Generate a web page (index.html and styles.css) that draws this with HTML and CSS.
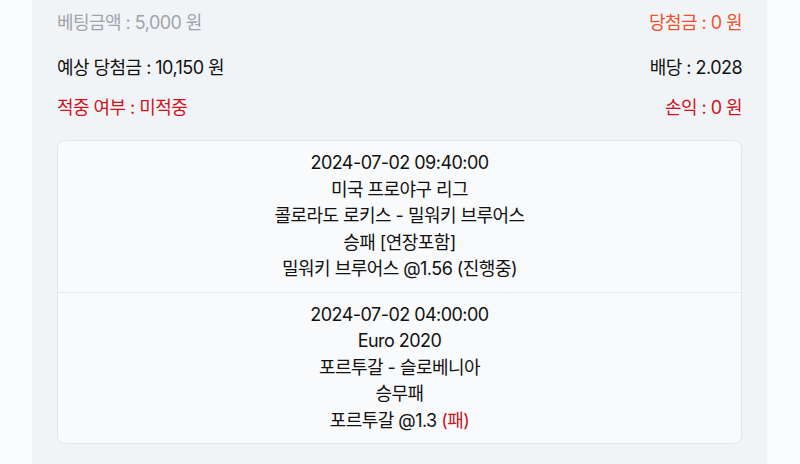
FILE: index.html
```html
<!DOCTYPE html>
<html lang="ko">
<head>
<meta charset="utf-8">
<link rel="stylesheet" href="styles.css">
</head>
<body>
<div class="panel">
  <div class="row row-first">
    <span class="muted">베팅금액 : 5,000 원</span>
    <span class="orange">당첨금 : 0 원</span>
  </div>
  <div class="row">
    <span>예상 당첨금 : 10,150 원</span>
    <span>배당 : 2.028</span>
  </div>
  <div class="row">
    <span class="red">적중 여부 : 미적중</span>
    <span class="red">손익 : 0 원</span>
  </div>
  <div class="card">
    <div class="game">
      <div>2024-07-02 09:40:00</div>
      <div>미국 프로야구 리그</div>
      <div>콜로라도 로키스 - 밀워키 브루어스</div>
      <div>승패 [연장포함]</div>
      <div>밀워키 브루어스 @1.56 (진행중)</div>
    </div>
    <div class="game">
      <div>2024-07-02 04:00:00</div>
      <div>Euro 2020</div>
      <div>포르투갈 - 슬로베니아</div>
      <div>승무패</div>
      <div>포르투갈 @1.3 <span class="red">(패)</span></div>
    </div>
  </div>
</div>
</body>
</html>
```

FILE: styles.css
```css
html, body {
  margin: 0;
  padding: 0;
  background: #fafbfc;
}
body {
  font-family: Inter, "Noto Sans CJK KR", sans-serif;
  font-size: 18px;
  color: #111;
  letter-spacing: -0.03em;
}
.panel {
  margin: 0 33px 0 32px;
  background: #f1f4f7;
  padding: 0 25px 20px 25px;
  height: 464px;
  box-sizing: border-box;
}
.row {
  display: flex;
  justify-content: space-between;
  align-items: center;
  height: 40px;
}
.row-first {
  height: 42px;
  margin-bottom: 4px;
}
.muted { color: #a0a4aa; }
.orange { color: #f0502d; }
.red { color: #d0111b; }
.card {
  margin-top: 14px;
  background: #f9fafb;
  border: 1.5px solid #e1e5ec;
  border-radius: 8px;
}
.game {
  text-align: center;
  line-height: 26.5px;
  padding: 9px 0;
}
.game + .game {
  border-top: 1.5px solid #e5e8ee;
}
```
